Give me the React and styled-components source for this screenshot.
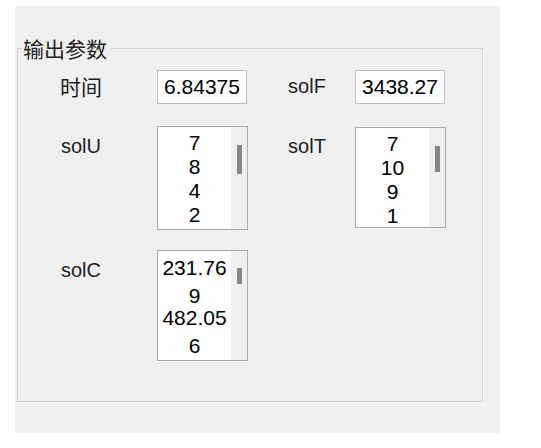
import styled, { createGlobalStyle } from 'styled-components';

const GlobalStyle = createGlobalStyle`
    html, body {
        margin: 0;
        background: #ffffff;
    }
`;

const Page = () => {
    return (
        <>
            <GlobalStyle />
            <Screen>
                <Panel>
                    <Group>
                        <Legend>输出参数</Legend>
                        <FieldGrid>
                            <Label $cjk $row>时间</Label>
                            <TextBox>6.84375</TextBox>
                            <Label $row>solF</Label>
                            <TextBox>3438.27</TextBox>

                            <Label>solU</Label>
                            <ListBox $height={104}>
                                <Items>
                                    {['7', '8', '4', '2', '3'].map((v, i) => (
                                        <Item key={i}>{v}</Item>
                                    ))}
                                </Items>
                                <Track>
                                    <Thumb $top={18} $height={29} />
                                </Track>
                            </ListBox>
                            <Label>solT</Label>
                            <ListBox $height={101} $offset={1}>
                                <Items>
                                    {['7', '10', '9', '1'].map((v, i) => (
                                        <Item key={i}>{v}</Item>
                                    ))}
                                </Items>
                                <Track>
                                    <Thumb $top={18} $height={26} />
                                </Track>
                            </ListBox>

                            <Label>solC</Label>
                            <ListBox $height={111}>
                                <Items $wrap>
                                    {['231.769', '482.056'].map((v, i) => (
                                        <WrapItem key={i}>{v}</WrapItem>
                                    ))}
                                </Items>
                                <Track>
                                    <Thumb $top={17} $height={16} />
                                </Track>
                            </ListBox>
                        </FieldGrid>
                    </Group>
                </Panel>
            </Screen>
        </>
    );
};
export default Page;

const Screen = styled.div`
    padding: 6px 0 0 15px;
`;

// 회색 패널
const Panel = styled.div`
    width: 485px;
    background: #f0f0f0;
    display: flow-root;
`;

const Group = styled.fieldset`
    margin: 30px 17px 31px 2px;
    padding: 0 0 40px 0;
    min-width: 0;
    border: 1px solid #d2d2d2;
    box-shadow: 1px 1px 0 #fbfbfb;
`;

const Legend = styled.legend`
    margin-left: 4px;
    padding: 0 4px 0 1px;
    font-family: 'Noto Sans CJK SC', 'Liberation Sans', sans-serif;
    font-size: 21px;
    line-height: 24px;
    color: #222;
`;

const FieldGrid = styled.div`
    display: grid;
    grid-template-columns: 116px 110px 88px 91px;
    grid-template-rows: 36px 104px 111px;
    row-gap: 20px;
    align-items: start;
    margin-top: 10px;
    padding-left: 23px;
`;

const Label = styled.div`
    width: 80px;
    text-align: center;
    font-family: ${(p) => (p.$cjk ? "'Noto Sans CJK SC', sans-serif" : "'Liberation Sans', Arial, sans-serif")};
    font-size: ${(p) => (p.$cjk ? '21px' : '20px')};
    color: #1e1e1e;
    height: ${(p) => (p.$row ? '33px' : 'auto')};
    line-height: ${(p) => (p.$row ? '33px' : '23px')};
    margin-top: ${(p) => (p.$row ? '0' : '9px')};
`;

const TextBox = styled.div`
    box-sizing: border-box;
    width: 90px;
    height: 34px;
    background: #fff;
    border: 1px solid #bcbcbc;
    text-align: center;
    font-family: 'Liberation Sans', Arial, sans-serif;
    font-size: 21px;
    line-height: 32px;
    color: #000;
`;

const ListBox = styled.div`
    box-sizing: border-box;
    width: 91px;
    height: ${(p) => p.$height}px;
    margin-top: ${(p) => p.$offset || 0}px;
    background: #fff;
    border: 1px solid #ababab;
    display: flex;
    overflow: hidden;
`;

const Items = styled.div`
    flex: 1;
    min-width: 0;
    padding-top: ${(p) => (p.$wrap ? '3px' : '4px')};
    display: flex;
    flex-direction: column;
    font-family: 'Liberation Sans', Arial, sans-serif;
    font-size: 21px;
    color: #000;
    text-align: center;
`;

const Item = styled.div`
    line-height: 24px;
`;

const WrapItem = styled.div`
    line-height: 28px;
    word-break: break-all;
    & + & {
        margin-top: -6px;
    }
`;

const Track = styled.div`
    flex: 0 0 16px;
    background: #f0f0f0;
`;

const Thumb = styled.div`
    width: 5px;
    height: ${(p) => p.$height}px;
    margin: ${(p) => p.$top}px 0 0 6px;
    background: #868686;
`;
